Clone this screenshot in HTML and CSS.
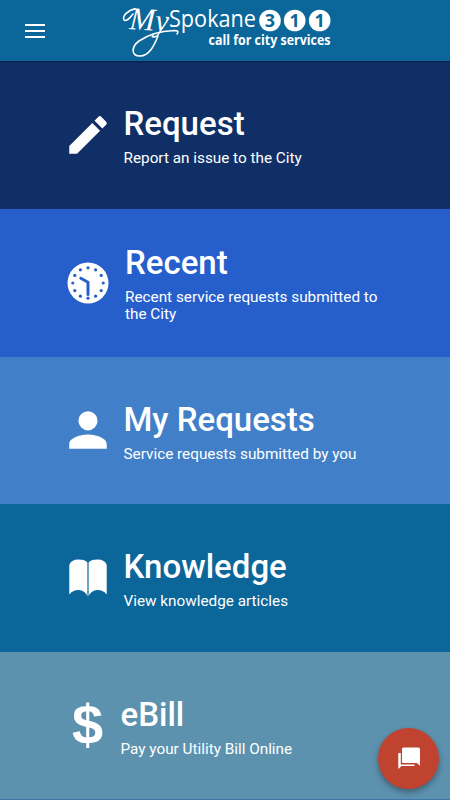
FILE: index.html
```html
<!DOCTYPE html>
<html lang="en">
<head>
    <meta charset="UTF-8">
    <meta name="viewport" content="width=device-width, initial-scale=1.0">
    <title>My Spokane 311</title>
    <link rel="stylesheet" href="styles.css">
</head>
<body>

<header class="topbar">
    <button class="menu-btn" aria-label="Menu">
        <span></span>
        <span></span>
        <span></span>
    </button>
    <svg class="logo" width="240" height="61" viewBox="0 0 240 61">
        <text class="logo-script" x="9" y="29" textLength="39" lengthAdjust="spacingAndGlyphs" transform="rotate(4 9 29)">My</text>
        <!-- flourish under the script -->
        <path class="logo-swoosh" d="M15 9C8 10 2 16 4 20C6 22 10 18 13 14M38 36C34 46 29 56 20 56C11 56 11 47 19 41C29 34 42 31 54 30.5Q60 30.5 57 34"/>
        <text class="logo-name" x="49" y="27.3" textLength="87" lengthAdjust="spacingAndGlyphs">Spokane</text>
        <circle cx="150" cy="20.5" r="10.8"/>
        <circle cx="174.7" cy="20.5" r="10.8"/>
        <circle cx="199.7" cy="20.5" r="10.8"/>
        <text class="logo-digit" x="150" y="27">3</text>
        <text class="logo-digit" x="174.7" y="27">1</text>
        <text class="logo-digit" x="199.7" y="27">1</text>
        <text class="logo-tag" x="88.5" y="45.3" textLength="122" lengthAdjust="spacingAndGlyphs">call for city services</text>
    </svg>
</header>

<main class="tiles">
    <a class="tile request">
        <svg class="icon" viewBox="0 0 24 24"><path d="M3 17.25V21h3.75L17.81 9.94l-3.75-3.75L3 17.25zM20.71 7.04a1 1 0 0 0 0-1.41l-2.34-2.34a1 1 0 0 0-1.41 0l-1.83 1.83 3.75 3.75 1.83-1.83z"/></svg>
        <div class="text">
            <h2>Request</h2>
            <p>Report an issue to the City</p>
        </div>
    </a>
    <a class="tile recent">
        <svg class="icon" viewBox="0 0 50 50">
            <circle cx="25" cy="25" r="20.5"/>
            <g class="dots">
                <circle cx="25" cy="9.8" r="1.6"/>
                <circle cx="32.6" cy="11.8" r="1.6"/>
                <circle cx="38.2" cy="17.4" r="1.6"/>
                <circle cx="40.2" cy="25" r="1.6"/>
                <circle cx="38.2" cy="32.6" r="1.6"/>
                <circle cx="32.6" cy="38.2" r="1.6"/>
                <circle cx="25" cy="40.2" r="1.6"/>
                <circle cx="17.4" cy="38.2" r="1.6"/>
                <circle cx="11.8" cy="32.6" r="1.6"/>
                <circle cx="9.8" cy="25" r="1.6"/>
                <circle cx="11.8" cy="17.4" r="1.6"/>
                <circle cx="17.4" cy="11.8" r="1.6"/>
            </g>
            <path class="hands" d="M17.8 20.3L25 24.2V36.5"/>
        </svg>
        <div class="text">
            <h2>Recent</h2>
            <p>Recent service requests submitted to the City</p>
        </div>
    </a>
    <a class="tile mine">
        <svg class="icon" viewBox="0 0 24 24"><path d="M12 12.2a4.6 4.6 0 1 0 0-9.2 4.6 4.6 0 0 0 0 9.2zM12 14.2c-3.1 0-9 1.5-9 4.6V21h18v-2.2c0-3.1-5.9-4.6-9-4.6z"/></svg>
        <div class="text">
            <h2>My Requests</h2>
            <p>Service requests submitted by you</p>
        </div>
    </a>
    <a class="tile knowledge">
        <svg class="icon" viewBox="0 0 50 50"><path d="M6.3 12Q8 6.5 15.5 6.5Q22.5 6.5 24.4 9.5V43.5Q22 37 15.5 37Q9.5 37 6.3 41.5ZM43.7 12Q42 6.5 34.5 6.5Q27.5 6.5 25.6 9.5V43.5Q28 37 34.5 37Q40.5 37 43.7 41.5Z"/></svg>
        <div class="text">
            <h2>Knowledge</h2>
            <p>View knowledge articles</p>
        </div>
    </a>
    <a class="tile ebill">
        <span class="icon dollar">$</span>
        <div class="text">
            <h2>eBill</h2>
            <p>Pay your Utility Bill Online</p>
        </div>
    </a>
</main>

<button class="chat-btn" aria-label="Chat">
    <svg width="24" height="24" viewBox="0 0 24 24">
        <path d="M1.3 6H3.8V17.6H17.5V19H4.5L1.3 22Z"/>
        <path d="M6.3 0.5H21.5Q23 0.5 23 2V18.8L19.8 16H6.3Q5 16 5 14.7V2Q5 0.5 6.3 0.5Z"/>
    </svg>
</button>

</body>
</html>
```
FILE: styles.css
```css
* {
    box-sizing: border-box;
}
body {
    margin: 0;
    height: 800px;
    overflow: hidden;
    display: flex;
    flex-direction: column;
    font-family: Roboto, sans-serif;
    background-color: #3f78a8;
    color: #fff;
}
button {
    border: 0;
    padding: 0;
}
.topbar {
    height: 61px;
    flex: none;
    display: flex;
    background-color: #0b669a;
}
.menu-btn {
    width: 20px;
    height: 14px;
    margin: 24px 75px 0 25px;
    background: none;
    display: flex;
    flex-direction: column;
    justify-content: space-between;
}
.menu-btn span {
    width: 20px;
    height: 2.4px;
    background-color: #fff;
}
.logo {
    fill: #fff;
}
.logo-script {
    font: italic 32px "Liberation Serif", serif;
}
.logo-swoosh {
    fill: none;
    stroke: #fff;
    stroke-width: 1.6;
    stroke-linecap: round;
}
.logo-name {
    font: 23px "Open Sans", sans-serif;
}
.logo-digit {
    font: bold 18px "Open Sans", sans-serif;
    fill: #0b669a;
    text-anchor: middle;
}
.logo-tag {
    font: bold 13.5px "Open Sans", sans-serif;
}
.tiles {
    height: 739px;
    flex: none;
    display: grid;
    grid-template-rows: repeat(5, 1fr);
}
.tile {
    display: flex;
    align-items: center;
    padding: 0 60px 0 62.5px;
}
.request {
    background-color: #0f2f66;
    box-shadow: inset 0 3px 2px -2px rgba(0, 0, 0, 0.3);
}
.recent {
    background-color: #265fcc;
}
.mine {
    background-color: #4180c8;
}
.knowledge {
    background-color: #0b669a;
}
.ebill {
    background-color: #5d92af;
    border-bottom: 1px solid #3f78a8;
}
.icon {
    width: 50px;
    height: 50px;
    flex: none;
    margin-right: 11px;
    fill: #fff;
}
.recent .icon {
    margin-right: 12.5px;
}
.dots {
    fill: #265fcc;
}
.hands {
    fill: none;
    stroke: #265fcc;
    stroke-width: 3;
    stroke-linecap: round;
    stroke-linejoin: round;
}
.dollar {
    margin-right: 8px;
    font: bold 56px/48px "Liberation Sans", sans-serif;
    text-align: center;
}
.text {
    padding-top: 1px;
}
.mine .text,
.ebill .text {
    padding-top: 2px;
}
h2 {
    margin: 0 0 6px;
    font-size: 33px;
    font-weight: 500;
    line-height: 40px;
}
p {
    margin: 0;
    font-size: 15.3px;
    line-height: 17.5px;
}
/* floating chat button */
.chat-btn {
    position: absolute;
    right: 11px;
    bottom: 11px;
    width: 61px;
    height: 61px;
    border-radius: 50%;
    background-color: #bf432f;
    box-shadow: 0 3px 6px rgba(0, 0, 0, 0.35);
    display: flex;
    align-items: center;
    justify-content: center;
}
.chat-btn svg {
    fill: #fff;
}
.chat-btn path + path {
    stroke: #bf432f;
    stroke-width: 1.4;
    paint-order: stroke;
}
```
